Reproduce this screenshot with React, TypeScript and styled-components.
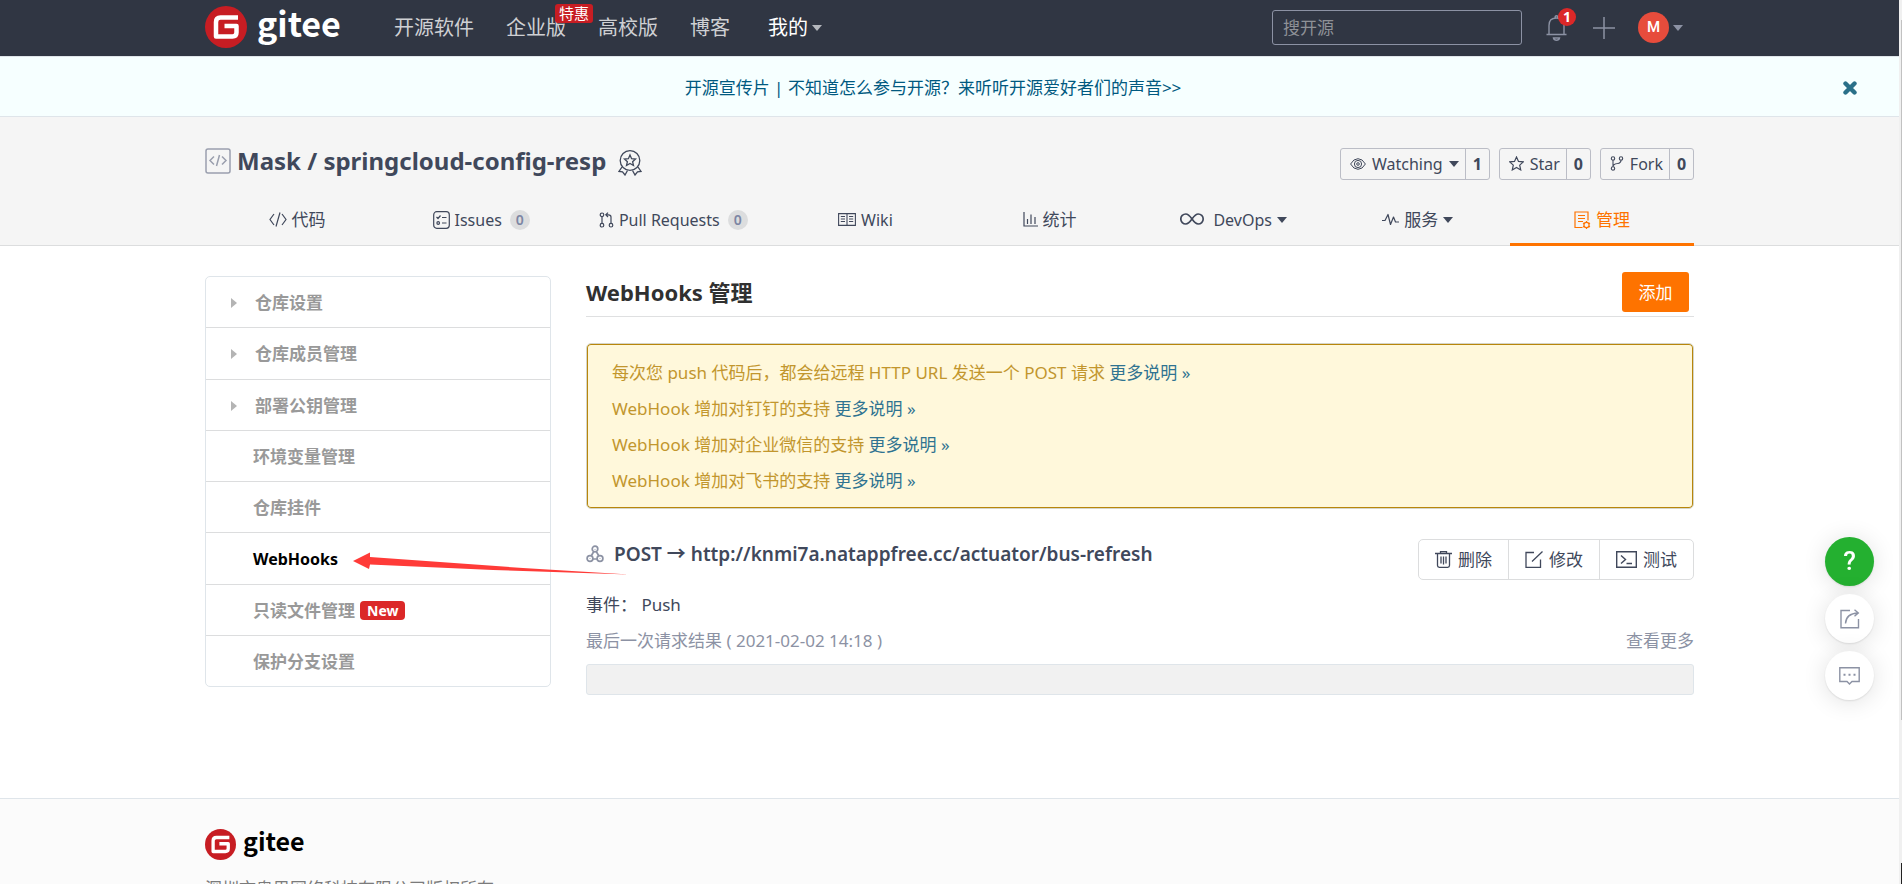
import React from 'react';
import styled, { createGlobalStyle, css } from 'styled-components';

const latin = '"Noto Sans", "Noto Sans CJK SC", sans-serif';

const GlobalStyle = createGlobalStyle`
  *, *::before, *::after { box-sizing: border-box; }
  body {
    margin: 0;
    background: #fff;
    color: #40485b;
    font: 400 17px/24px ${latin};
  }
  a { color: inherit; text-decoration: none; }
  button, input { font: inherit; color: inherit; }
  button { cursor: pointer; }
  ul, h1, h2, h3, p { margin: 0; padding: 0; }
  ul { list-style: none; }
  svg { display: block; flex: none; }
`;

const Shell = styled.div`
  display: flex;
  height: 100vh;
  overflow: hidden;
`;

const Page = styled.div`
  flex: 1;
  min-width: 0;
  overflow: hidden;
`;

const ScrollTrack = styled.div`
  display: flex;
  flex-direction: column;
  align-items: flex-end;
  justify-content: space-between;
  width: 3px;
  padding-top: 20px;
  background: #f0f0f0;
`;

const ScrollThumb = styled.div`
  width: 1px;
  height: 81%;
  background: #c1c1c1;
`;

const ScrollEnd = styled.div`
  width: 1px;
  height: 21px;
  background: #222;
`;

const Container = styled.div`
  width: min(1489px, 100% - 32px);
  margin: 0 auto;
`;

/* ---------- top bar ---------- */

const TopBar = styled.header`
  background: #303643;
  border-bottom: 1px solid #dfe5ea;
`;

const TopInner = styled(Container)`
  display: flex;
  align-items: center;
  height: 56px;
`;

const Brand = styled.a<{ $small?: boolean }>`
  display: flex;
  align-items: center;
  gap: ${(p) => (p.$small ? 7 : 10)}px;
  width: ${(p) => (p.$small ? 'auto' : '189px')};
  padding-bottom: 2px;
  color: ${(p) => (p.$small ? '#000' : '#fff')};
  font: 700 ${(p) => (p.$small ? 25 : 34)}px/32px 'Noto Sans CJK SC', sans-serif;
`;

const BrandName = styled.span`
  padding-bottom: 9px;
`;

const Nav = styled.nav`
  display: flex;
  align-items: center;
  gap: 32px;
  font-size: 20px;
  line-height: 28px;
`;

const NavLink = styled.a<{ $active?: boolean }>`
  position: relative;
  display: flex;
  align-items: center;
  gap: 4px;
  margin-left: ${(p) => (p.$active ? 6 : 0)}px;
  color: ${(p) => (p.$active ? '#fff' : '#cfd0d3')};
`;

const Promo = styled.span`
  position: absolute;
  left: 49px;
  top: -10px;
  padding: 0 4px;
  border-radius: 3px;
  background: #c71d23;
  color: #fff;
  font-size: 15px;
  line-height: 19px;
  white-space: nowrap;
`;

const Caret = styled.span<{ $color?: string }>`
  border: 5px solid transparent;
  border-top: 6px solid ${(p) => p.$color || 'currentColor'};
  border-bottom: 0;
`;

const Tools = styled.div`
  display: flex;
  align-items: center;
  margin-left: auto;
  padding: 0 11px 1px 0;
`;

const Search = styled.input`
  width: 250px;
  height: 35px;
  margin-right: 24px;
  padding: 0 10px;
  border: 1px solid #8c92a4;
  border-radius: 3px;
  background: transparent;
  outline: none;
  &::placeholder { color: #8e9197; opacity: 1; }
`;

const ToolButton = styled.button<{ $gap: number }>`
  position: relative;
  display: flex;
  align-items: center;
  gap: 4px;
  margin-right: ${(p) => p.$gap}px;
  padding: 0;
  border: 0;
  background: none;
  color: #8c92a4;
`;

const Count = styled.span`
  position: absolute;
  left: 12px;
  top: -7px;
  width: 18px;
  height: 18px;
  border-radius: 9px;
  background: #db2828;
  color: #fff;
  font-size: 14px;
  font-weight: 700;
  line-height: 18px;
  text-align: center;
`;

const Avatar = styled.span`
  width: 31px;
  height: 31px;
  border-radius: 50%;
  background: #e74c3c;
  color: #fff;
  font: 500 15px/31px Roboto, sans-serif;
  text-align: center;
`;

/* ---------- notice ---------- */

const Notice = styled.div`
  display: flex;
  align-items: center;
  height: 60px;
  padding: 2px 42px 0 0;
  border-bottom: 1px solid #dfe5ea;
  background: #f6ffff;
  color: #005980;
`;

const NoticeLink = styled.a`
  flex: 1;
  padding-left: 23px;
  text-align: center;
`;

const CloseButton = styled.button`
  padding: 0;
  border: 0;
  background: none;
`;

/* ---------- repository header ---------- */

const RepoHeader = styled.section`
  border-bottom: 1px solid #dcddde;
  background: #f5f5f5;
`;

const RepoTop = styled(Container)`
  display: flex;
  align-items: center;
  height: 79px;
  padding-top: 12px;
`;

const RepoTitle = styled.h1`
  display: flex;
  align-items: center;
  gap: 6px;
  padding-bottom: 3px;
  font-size: 24px;
  font-weight: 700;
  line-height: 32px;
`;

const Medal = styled.span`
  padding: 3px 0 0 6px;
`;

const RepoActions = styled.div`
  display: flex;
  gap: 9px;
  margin-left: auto;
  padding-top: 2px;
`;

const ActionGroup = styled.div`
  display: flex;
  height: 32px;
  border: 1px solid #bbbdc6;
  border-radius: 3px;
  font-size: 16px;
  line-height: 30px;
`;

const ActionButton = styled.button`
  display: flex;
  align-items: center;
  gap: 6px;
  padding: 0 6px 0 9px;
  border: 0;
  background: none;
`;

const ActionCount = styled.a`
  width: 24px;
  border-left: 1px solid #bbbdc6;
  font-weight: 700;
  text-align: center;
`;

const Tabs = styled(Container)`
  display: flex;
  height: 50px;
  margin-bottom: -1px;
`;

const Tab = styled.a<{ $wide?: boolean; $active?: boolean }>`
  display: flex;
  flex: ${(p) => (p.$wide ? 200 : 184)} 1 0;
  align-items: center;
  justify-content: center;
  gap: 5px;
  border-bottom: 3px solid transparent;
  ${(p) =>
    p.$active &&
    css`
      border-color: #fe7300;
      color: #fe7300;
    `}
`;

const TabText = styled.span<{ $latin?: boolean }>`
  font-size: ${(p) => (p.$latin ? 16 : 17)}px;
`;

const TabCount = styled.span`
  min-width: 20px;
  margin-left: 3px;
  border-radius: 10px;
  background: #dcddde;
  color: #7c86a4;
  font-size: 14px;
  font-weight: 600;
  line-height: 20px;
  text-align: center;
`;

/* ---------- body ---------- */

const Body = styled(Container)`
  display: flex;
  align-items: flex-start;
  gap: 35px;
  min-height: 552px;
  padding-top: 26px;
`;

const Side = styled.ul`
  display: flex;
  flex: none;
  flex-direction: column;
  width: 346px;
  min-height: 411px;
  margin-top: 4px;
  border: 1px solid #dfe5ea;
  border-radius: 5px;
`;

const SideItem = styled.li`
  position: relative;
  display: flex;
  flex: 1;
  & + & { border-top: 1px solid #dcddde; }
`;

const SideLink = styled.a<{ $active?: boolean; $nested?: boolean }>`
  display: flex;
  flex: 1;
  align-items: center;
  gap: ${(p) => (p.$nested ? 18 : 5)}px;
  padding: 2px 0 0 ${(p) => (p.$nested ? 25 : 47)}px;
  color: ${(p) => (p.$active ? '#000' : '#999')};
  font-size: ${(p) => (p.$active ? 16 : 17)}px;
  font-weight: 700;
`;

const SideCaret = styled.span`
  border: 5px solid transparent;
  border-left: 6px solid #b4b4b4;
  border-right: 0;
`;

const NewTag = styled.span`
  padding: 0 7px;
  border-radius: 4px;
  background: #db2828;
  color: #fff;
  font-size: 14px;
  line-height: 19px;
`;

const Pointer = styled.svg`
  position: absolute;
  left: 147px;
  top: 19px;
  z-index: 1;
`;

const Main = styled.main`
  flex: 1;
  min-width: 0;
`;

const MainHead = styled.div`
  display: flex;
  align-items: center;
  justify-content: space-between;
  height: 45px;
  padding: 0 5px 4px 0;
  border-bottom: 1px solid #dfe0e1;
  color: #303030;
`;

const MainTitle = styled.h2`
  font-size: 22px;
  font-weight: 700;
  line-height: 30px;
`;

const AddButton = styled.button`
  width: 67px;
  height: 40px;
  padding: 2px 0 0;
  border: 0;
  border-radius: 3px;
  background: #fe7300;
  color: #fff;
`;

const Tips = styled.div`
  margin-top: 26px;
  padding: 11px 25px 9px;
  border: 1px solid #d5d5c8;
  border-radius: 5px;
  background: #fff8db;
  box-shadow: inset 0 0 0 1px #b8860b;
  color: #c2962d;
  line-height: 36px;
`;

const TipLink = styled.a`
  color: #2f7391;
`;

const HookHead = styled.div`
  display: flex;
  align-items: flex-start;
  justify-content: space-between;
  margin-top: 30px;
`;

const HookTitle = styled.h3`
  display: flex;
  align-items: center;
  gap: 10px;
  font-size: 19px;
  font-weight: 600;
  line-height: 30px;
`;

const Buttons = styled.div`
  display: flex;
  height: 41px;
  border: 1px solid #dcddde;
  border-radius: 5px;
`;

const HookButton = styled.button`
  display: flex;
  align-items: center;
  gap: 6px;
  padding: 0 16px;
  border: 0;
  background: none;
  & + & { border-left: 1px solid #dcddde; }
`;

const Line = styled.div<{ $muted?: boolean }>`
  display: flex;
  justify-content: space-between;
  margin-top: ${(p) => (p.$muted ? 12 : 13)}px;
  color: ${(p) => (p.$muted ? '#8c92a4' : '#40485b')};
`;

const Result = styled.div`
  height: 31px;
  margin-top: 11px;
  border: 1px solid #dfe5ea;
  border-radius: 3px;
  background: #f1f1f1;
`;

/* ---------- footer and floating help ---------- */

const Footer = styled.footer`
  padding-top: 25px;
  border-top: 1px solid #dfe5ea;
  background: #fbfbfb;
  color: #7b7b7b;
`;

const Copyright = styled.p`
  margin-top: 10px;
`;

const Floating = styled.aside`
  position: fixed;
  right: 28px;
  top: 537px;
  display: flex;
  flex-direction: column;
  gap: 8px;
`;

const RoundButton = styled.button<{ $primary?: boolean }>`
  display: flex;
  align-items: center;
  justify-content: center;
  width: 49px;
  height: 49px;
  padding: 0;
  border: 0;
  border-radius: 50%;
  background: ${(p) => (p.$primary ? '#24b030' : '#fff')};
  box-shadow: 0 1px 2px rgba(0, 0, 0, 0.1), 0 2px 24px rgba(0, 0, 0, 0.12);
  color: ${(p) => (p.$primary ? '#fff' : '#8c92a4')};
  font: 500 26px/49px Roboto, sans-serif;
`;

/* ---------- icons ---------- */

type IconProps = { w: number; h: number; sw?: number; children: React.ReactNode };

const Icon = ({ w, h, sw = 1, children }: IconProps) => (
  <svg width={w} height={h} viewBox={`0 0 ${w} ${h}`} fill="none" stroke="currentColor" strokeWidth={sw} aria-hidden="true">
    {children}
  </svg>
);

const GLogo = ({ size }: { size: number }) => (
  <svg width={size} height={size} viewBox="0 0 42 42" aria-hidden="true">
    <circle cx="21" cy="21" r="21" fill="#c71d23" />
    <path d="M33 11.5H15.5Q11 11.5 11 16V30.5H27.5Q31.500 30.500 31.500 26.500V20H19.500" fill="none" stroke="#fff" strokeWidth="4.500" strokeLinejoin="round" />
  </svg>
);

const BellIcon = () => (
  <Icon w={21} h={26} sw={1.4}>
    <path d="M0.500 19.500H20.500M3 19.500V10.500Q3 3 10.500 3Q18 3 18 10.500V19.500M9 3Q9 .8 10.500.8Q12 .8 12 3M7.500 23Q8 25.200 10.500 25.200Q13 25.200 13.500 23Z" />
  </Icon>
);
const PlusIcon = () => (
  <Icon w={22} h={22} sw={1.5}>
    <path d="M11 0V22M0 11H22" />
  </Icon>
);
const CloseIcon = () => (
  <Icon w={14} h={14} sw={4.4}>
    <path d="M2.500 2.500L11.500 11.500M11.500 2.500L2.500 11.500" stroke="#2a7089" strokeLinecap="round" />
  </Icon>
);
const RepoIcon = () => (
  <svg width="26" height="26" viewBox="0 0 26 26" fill="none" stroke="#9a9fae" strokeWidth="1.500" aria-hidden="true">
    <rect x="1" y="1" width="24" height="24" rx="2" />
    <path d="M9 8.500L5 12.500L9 16.500M17 8.500L21 12.500L17 16.500M14.500 7L11.500 18" />
  </svg>
);
const MedalIcon = () => (
  <Icon w={24} h={26} sw={1.3}>
    <circle cx="12" cy="10.500" r="9.800" />
    <path d="M12 5L13.600 8.700L17.500 9L14.600 11.700L15.500 15.500L12 13.500L8.500 15.500L9.400 11.700L6.500 9L10.400 8.700ZM4 17L1 21.500L4.500 21.800L7 25L9.500 20.500M20 17L23 21.500L19.500 21.800L17 25L14.500 20.500" />
  </Icon>
);
const EyeIcon = () => (
  <Icon w={16} h={12} sw={1}>
    <path d="M.6 6Q3.500.7 8 .7T15.400 6Q12.500 11.300 8 11.300T.6 6Z" />
    <circle cx="8" cy="6" r="3.600" />
    <circle cx="8" cy="6" r="1.300" />
  </Icon>
);
const StarIcon = () => (
  <Icon w={15} h={15} sw={1.2}>
    <path d="M7.500 1L9.500 5.400L14.300 5.900L10.700 9.100L11.700 13.900L7.500 11.400L3.300 13.900L4.300 9.100L.7 5.900L5.500 5.400Z" />
  </Icon>
);
const ForkIcon = () => (
  <Icon w={14} h={15} sw={1.1}>
    <circle cx="3" cy="2.500" r="1.700" />
    <circle cx="3" cy="12.500" r="1.700" />
    <circle cx="11" cy="2.500" r="1.700" />
    <path d="M3 4.200V10.800M11 4.200Q11 7 7.500 7.500Q3 8 3 10.800" />
  </Icon>
);
const CodeIcon = () => (
  <Icon w={18} h={15} sw={1.2}>
    <path d="M5 2L1 7.500L5 13M13 2L17 7.500L13 13M11 .5L7 14.500" />
  </Icon>
);
const IssueIcon = () => (
  <Icon w={17} h={18} sw={1.2}>
    <rect x="0.700" y="0.700" width="15.600" height="16.600" rx="3" />
    <path d="M3.500 6L5 7.500L7.500 4.500M9 6.500H13.500M9 12H13.500" />
    <circle cx="5.200" cy="12" r="1.300" />
  </Icon>
);
const PullIcon = () => (
  <Icon w={15} h={16} sw={1.2}>
    <circle cx="3" cy="2.800" r="1.800" />
    <circle cx="3" cy="13.200" r="1.800" />
    <circle cx="12" cy="13.200" r="1.800" />
    <path d="M3 4.600V11.400M12 11.400V5Q12 2.800 9.500 2.800H7M9 .6L6.800 2.800L9 5" />
  </Icon>
);
const BookIcon = () => (
  <Icon w={18} h={13} sw={1.1}>
    <path d="M.6 .6H17.400V12.400H.6ZM9 .6V12.400M2.800 3.500H7M2.800 6H7M2.800 8.500H7M11 3.500H15.200M11 6H15.200M11 8.500H15.200" />
  </Icon>
);
const StatsIcon = () => (
  <Icon w={15} h={15} sw={1.2}>
    <path d="M1 0V14H15M4.500 12V7M8 12V2.500M12 12V5" />
  </Icon>
);
const LoopIcon = () => (
  <Icon w={28} h={14} sw={1.7}>
    <path d="M12 6C9.500 2.500 8 1 5.800 1A5 5 0 0 0 5.800 11C8 11 9.500 9.500 12 6C14.500 2.500 16 1 18.200 1A5 5 0 0 1 18.200 11C16 11 14.500 9.500 12 6Z" />
  </Icon>
);
const PulseIcon = () => (
  <Icon w={17} h={13} sw={1.2}>
    <path d="M0 7.500H3L6 1.500L8.500 11.500L11.500 4L13.500 9H17" strokeLinejoin="round" />
  </Icon>
);
const ManageIcon = () => (
  <Icon w={17} h={18} sw={1.2}>
    <path d="M8.500 16.500H1V1H14V9.500M4 4.500H11M4 7.500H11M4 10.500H9" />
    <circle cx="12.500" cy="14" r="2.600" />
    <path d="M12.500 10V11.400M12.500 16.600V18M9 12L10.300 12.700M14.700 15.300L16 16M9 16L10.300 15.300M14.700 12.700L16 12" />
  </Icon>
);
const HookIcon = () => (
  <svg width="18" height="18" viewBox="0 0 18 18" fill="none" stroke="#8c92a4" strokeWidth="1.700" aria-hidden="true">
    <circle cx="9" cy="4" r="2.800" />
    <circle cx="4" cy="13.500" r="2.900" />
    <circle cx="14" cy="13.500" r="2.900" />
    <path d="M7.800 6.500L5.500 10.500M10.200 6.500L12.800 10.800M6.800 14H11.200" />
    <path d="M9 4V4.500M4 13.500V14M14 13.500V14" strokeWidth="1.500" />
  </svg>
);
const TrashIcon = () => (
  <Icon w={17} h={17} sw={1.3}>
    <path d="M0 2.500H17M5.500 2.500V.7H11.500V2.500M2.500 2.500V14.500Q2.500 16.300 4.300 16.300H12.700Q14.500 16.300 14.500 14.500V2.500M6 5.500V12.500M8.500 5.500V13.500M11 5.500V12.500" />
  </Icon>
);
const EditIcon = () => (
  <Icon w={18} h={17} sw={1.3}>
    <path d="M9 1.500H1V16.300H15.500V8.500M17.500 .5L7 10.500" />
  </Icon>
);
const ConsoleIcon = () => (
  <Icon w={21} h={17} sw={1.4}>
    <path d="M.7.7H20.300V16.300H.7ZM5 4.500L9.500 8.500L5 12.500M10.500 12.500H16" />
  </Icon>
);
const ShareIcon = () => (
  <Icon w={20} h={20} sw={1.4}>
    <path d="M10 1.500H1V18.800H18.500V10M5.500 14.500Q6 4.500 18 4M14.500.8L18.300 4L14.500 7.200" />
  </Icon>
);
const ChatIcon = () => (
  <Icon w={21} h={18} sw={1.4}>
    <path d="M.8.8H20.200V14.500H13L10.500 17L8 14.500H.8Z" />
    <path d="M4.500 7.800H6.500M9.500 7.800H11.500M14.500 7.800H16.500" strokeWidth="2" />
  </Icon>
);

/* ---------- data ---------- */

const tabs = [
  { icon: <CodeIcon />, text: '代码' },
  { icon: <IssueIcon />, text: 'Issues', latin: true, count: 0 },
  { icon: <PullIcon />, text: 'Pull Requests', latin: true, count: 0, wide: true },
  { icon: <BookIcon />, text: 'Wiki', latin: true },
  { icon: <StatsIcon />, text: '统计' },
  { icon: <LoopIcon />, text: 'DevOps', latin: true, menu: true },
  { icon: <PulseIcon />, text: '服务', menu: true },
  { icon: <ManageIcon />, text: '管理', active: true },
];

const sideItems = [
  { text: '仓库设置', nested: true },
  { text: '仓库成员管理', nested: true },
  { text: '部署公钥管理', nested: true },
  { text: '环境变量管理' },
  { text: '仓库挂件' },
  { text: 'WebHooks', active: true },
  { text: '只读文件管理', isNew: true },
  { text: '保护分支设置' },
];

const tips = [
  '每次您 push 代码后，都会给远程 HTTP URL 发送一个 POST 请求',
  'WebHook 增加对钉钉的支持',
  'WebHook 增加对企业微信的支持',
  'WebHook 增加对飞书的支持',
];

export default function App() {
  return (
    <Shell>
      <GlobalStyle />
      <Page>
        <TopBar>
          <TopInner>
            <Brand href="#">
              <GLogo size={42} />
              <BrandName>gitee</BrandName>
            </Brand>
            <Nav>
              <NavLink href="#">开源软件</NavLink>
              <NavLink href="#">
                企业版<Promo>特惠</Promo>
              </NavLink>
              <NavLink href="#">高校版</NavLink>
              <NavLink href="#">博客</NavLink>
              <NavLink href="#" $active>
                我的
                <Caret $color="#b4b7bd" />
              </NavLink>
            </Nav>
            <Tools>
              <Search type="search" placeholder="搜开源" aria-label="搜开源" />
              <ToolButton $gap={26} aria-label="通知">
                <BellIcon />
                <Count>1</Count>
              </ToolButton>
              <ToolButton $gap={23} aria-label="新建">
                <PlusIcon />
              </ToolButton>
              <ToolButton $gap={0}>
                <Avatar>M</Avatar>
                <Caret />
              </ToolButton>
            </Tools>
          </TopInner>
        </TopBar>

        <Notice>
          <NoticeLink href="#">开源宣传片 | 不知道怎么参与开源？来听听开源爱好者们的声音&gt;&gt;</NoticeLink>
          <CloseButton aria-label="关闭">
            <CloseIcon />
          </CloseButton>
        </Notice>

        <RepoHeader>
          <RepoTop>
            <RepoTitle>
              <RepoIcon />
              <a href="#">Mask / springcloud-config-resp</a>
              <Medal>
                <MedalIcon />
              </Medal>
            </RepoTitle>
            <RepoActions>
              <ActionGroup>
                <ActionButton>
                  <EyeIcon />
                  Watching
                  <Caret />
                </ActionButton>
                <ActionCount href="#">1</ActionCount>
              </ActionGroup>
              <ActionGroup>
                <ActionButton>
                  <StarIcon />
                  Star
                </ActionButton>
                <ActionCount href="#">0</ActionCount>
              </ActionGroup>
              <ActionGroup>
                <ActionButton>
                  <ForkIcon />
                  Fork
                </ActionButton>
                <ActionCount href="#">0</ActionCount>
              </ActionGroup>
            </RepoActions>
          </RepoTop>
          <Tabs as="nav">
            {tabs.map((t) => (
              <Tab key={t.text} href="#" $wide={t.wide} $active={t.active}>
                {t.icon}
                <TabText $latin={t.latin}>{t.text}</TabText>
                {t.count !== undefined && <TabCount>{t.count}</TabCount>}
                {t.menu && <Caret />}
              </Tab>
            ))}
          </Tabs>
        </RepoHeader>

        <Body>
          <Side>
            {sideItems.map((s) => (
              <SideItem key={s.text}>
                <SideLink href="#" $active={s.active} $nested={s.nested}>
                  {s.nested && <SideCaret />}
                  {s.text}
                  {s.isNew && <NewTag>New</NewTag>}
                </SideLink>
                {s.active && (
                  <Pointer width="276" height="24" viewBox="0 0 276 24" aria-hidden="true">
                    <path d="M0 9L17 0.500V5L170 16L276 22.500L140 18L17 12.500L16 17Z" fill="#ff3b38" />
                  </Pointer>
                )}
              </SideItem>
            ))}
          </Side>

          <Main>
            <MainHead>
              <MainTitle>WebHooks 管理</MainTitle>
              <AddButton>添加</AddButton>
            </MainHead>
            <Tips>
              {tips.map((t) => (
                <p key={t}>
                  {t} <TipLink href="#">更多说明 »</TipLink>
                </p>
              ))}
            </Tips>
            <HookHead>
              <HookTitle>
                <HookIcon />
                <a href="#">POST → http://knmi7a.natappfree.cc/actuator/bus-refresh</a>
              </HookTitle>
              <Buttons>
                <HookButton>
                  <TrashIcon />
                  删除
                </HookButton>
                <HookButton>
                  <EditIcon />
                  修改
                </HookButton>
                <HookButton>
                  <ConsoleIcon />
                  测试
                </HookButton>
              </Buttons>
            </HookHead>
            <Line>
              <span>事件： Push</span>
            </Line>
            <Line $muted>
              <span>最后一次请求结果 ( 2021-02-02 14:18 )</span>
              <a href="#">查看更多</a>
            </Line>
            <Result />
          </Main>
        </Body>

        <Footer>
          <Container>
            <Brand href="#" $small>
              <GLogo size={31} />
              <BrandName>gitee</BrandName>
            </Brand>
            <Copyright>深圳市奥思网络科技有限公司版权所有</Copyright>
          </Container>
        </Footer>
      </Page>

      <ScrollTrack>
        <ScrollThumb />
        <ScrollEnd />
      </ScrollTrack>

      <Floating>
        <RoundButton $primary aria-label="帮助">?</RoundButton>
        <RoundButton aria-label="分享">
          <ShareIcon />
        </RoundButton>
        <RoundButton aria-label="反馈">
          <ChatIcon />
        </RoundButton>
      </Floating>
    </Shell>
  );
}
